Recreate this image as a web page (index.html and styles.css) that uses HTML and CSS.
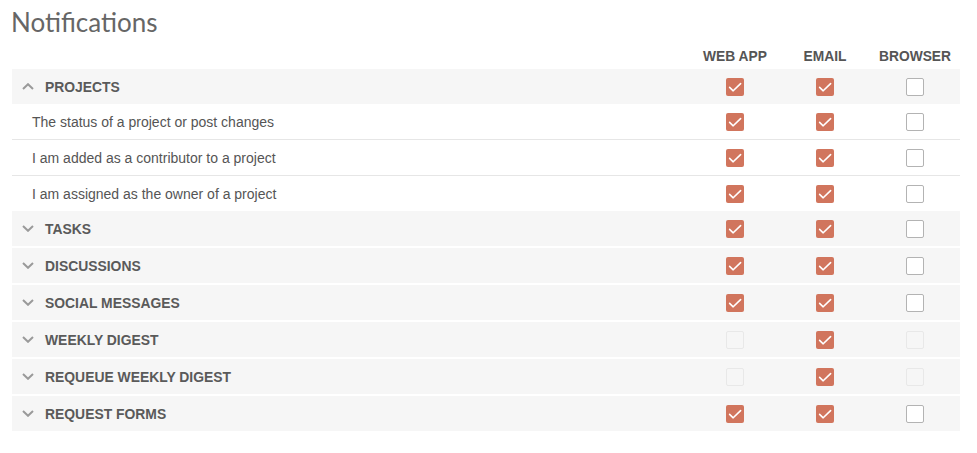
FILE: index.html
```html
<!DOCTYPE html>
<html>
<head>
<meta charset="utf-8">
<link rel="stylesheet" href="styles.css">
</head>
<body>
<div class="page">
  <h1 class="title">Notifications</h1>
  <div class="table">
    <div class="row head">
      <div></div>
      <div class="col">WEB APP</div>
      <div class="col">EMAIL</div>
      <div class="col">BROWSER</div>
    </div>

    <div class="row group open">
      <div class="label"><svg class="chev" width="12" height="7" viewBox="0 0 12 7"><polyline points="1,6 6,1.2 11,6"/></svg>PROJECTS</div>
      <div class="cell"><span class="cb on"><svg viewBox="0 0 18 18"><polyline points="3.6,9.4 7.2,12.8 14.6,5.6"/></svg></span></div>
      <div class="cell"><span class="cb on"><svg viewBox="0 0 18 18"><polyline points="3.6,9.4 7.2,12.8 14.6,5.6"/></svg></span></div>
      <div class="cell"><span class="cb"></span></div>
    </div>
    <div class="row sub">
      <div class="text">The status of a project or post changes</div>
      <div class="cell"><span class="cb on"><svg viewBox="0 0 18 18"><polyline points="3.6,9.4 7.2,12.8 14.6,5.6"/></svg></span></div>
      <div class="cell"><span class="cb on"><svg viewBox="0 0 18 18"><polyline points="3.6,9.4 7.2,12.8 14.6,5.6"/></svg></span></div>
      <div class="cell"><span class="cb"></span></div>
    </div>
    <div class="row sub">
      <div class="text">I am added as a contributor to a project</div>
      <div class="cell"><span class="cb on"><svg viewBox="0 0 18 18"><polyline points="3.6,9.4 7.2,12.8 14.6,5.6"/></svg></span></div>
      <div class="cell"><span class="cb on"><svg viewBox="0 0 18 18"><polyline points="3.6,9.4 7.2,12.8 14.6,5.6"/></svg></span></div>
      <div class="cell"><span class="cb"></span></div>
    </div>
    <div class="row sub last">
      <div class="text">I am assigned as the owner of a project</div>
      <div class="cell"><span class="cb on"><svg viewBox="0 0 18 18"><polyline points="3.6,9.4 7.2,12.8 14.6,5.6"/></svg></span></div>
      <div class="cell"><span class="cb on"><svg viewBox="0 0 18 18"><polyline points="3.6,9.4 7.2,12.8 14.6,5.6"/></svg></span></div>
      <div class="cell"><span class="cb"></span></div>
    </div>

    <div class="row group">
      <div class="label"><svg class="chev" width="12" height="7" viewBox="0 0 12 7"><polyline points="1,1 6,5.8 11,1"/></svg>TASKS</div>
      <div class="cell"><span class="cb on"><svg viewBox="0 0 18 18"><polyline points="3.6,9.4 7.2,12.8 14.6,5.6"/></svg></span></div>
      <div class="cell"><span class="cb on"><svg viewBox="0 0 18 18"><polyline points="3.6,9.4 7.2,12.8 14.6,5.6"/></svg></span></div>
      <div class="cell"><span class="cb"></span></div>
    </div>
    <div class="row group">
      <div class="label"><svg class="chev" width="12" height="7" viewBox="0 0 12 7"><polyline points="1,1 6,5.8 11,1"/></svg>DISCUSSIONS</div>
      <div class="cell"><span class="cb on"><svg viewBox="0 0 18 18"><polyline points="3.6,9.4 7.2,12.8 14.6,5.6"/></svg></span></div>
      <div class="cell"><span class="cb on"><svg viewBox="0 0 18 18"><polyline points="3.6,9.4 7.2,12.8 14.6,5.6"/></svg></span></div>
      <div class="cell"><span class="cb"></span></div>
    </div>
    <div class="row group">
      <div class="label"><svg class="chev" width="12" height="7" viewBox="0 0 12 7"><polyline points="1,1 6,5.8 11,1"/></svg>SOCIAL MESSAGES</div>
      <div class="cell"><span class="cb on"><svg viewBox="0 0 18 18"><polyline points="3.6,9.4 7.2,12.8 14.6,5.6"/></svg></span></div>
      <div class="cell"><span class="cb on"><svg viewBox="0 0 18 18"><polyline points="3.6,9.4 7.2,12.8 14.6,5.6"/></svg></span></div>
      <div class="cell"><span class="cb"></span></div>
    </div>
    <div class="row group">
      <div class="label"><svg class="chev" width="12" height="7" viewBox="0 0 12 7"><polyline points="1,1 6,5.8 11,1"/></svg>WEEKLY DIGEST</div>
      <div class="cell"><span class="cb off"></span></div>
      <div class="cell"><span class="cb on"><svg viewBox="0 0 18 18"><polyline points="3.6,9.4 7.2,12.8 14.6,5.6"/></svg></span></div>
      <div class="cell"><span class="cb off"></span></div>
    </div>
    <div class="row group">
      <div class="label"><svg class="chev" width="12" height="7" viewBox="0 0 12 7"><polyline points="1,1 6,5.8 11,1"/></svg>REQUEUE WEEKLY DIGEST</div>
      <div class="cell"><span class="cb off"></span></div>
      <div class="cell"><span class="cb on"><svg viewBox="0 0 18 18"><polyline points="3.6,9.4 7.2,12.8 14.6,5.6"/></svg></span></div>
      <div class="cell"><span class="cb off"></span></div>
    </div>
    <div class="row group">
      <div class="label"><svg class="chev" width="12" height="7" viewBox="0 0 12 7"><polyline points="1,1 6,5.8 11,1"/></svg>REQUEST FORMS</div>
      <div class="cell"><span class="cb on"><svg viewBox="0 0 18 18"><polyline points="3.6,9.4 7.2,12.8 14.6,5.6"/></svg></span></div>
      <div class="cell"><span class="cb on"><svg viewBox="0 0 18 18"><polyline points="3.6,9.4 7.2,12.8 14.6,5.6"/></svg></span></div>
      <div class="cell"><span class="cb"></span></div>
    </div>
  </div>
</div>
</body>
</html>
```

FILE: styles.css
```css
html, body {
  margin: 0;
  padding: 0;
  background: #ffffff;
}
.page {
  padding: 7px 17px 0 12px;
  font-family: "Liberation Sans", Arial, sans-serif;
  color: #555555;
}
.title {
  margin: 0 0 0 -1px;
  font-family: Lato, "Open Sans", sans-serif;
  font-weight: 400;
  font-size: 26px;
  line-height: 31px;
  color: #666666;
}
.table {
  display: flex;
  flex-direction: column;
}
.row {
  display: grid;
  grid-template-columns: 1fr 90px 90px 90px;
  align-items: center;
}
.head {
  height: 25px;
  margin-top: 6px;
  font-weight: 700;
  font-size: 13.8px;
  color: #555555;
}
.col {
  text-align: center;
}
.group {
  height: 35px;
  background: #f6f6f6;
  margin-bottom: 2px;
}
.group.open {
  margin-bottom: 0;
}
.label {
  display: flex;
  align-items: center;
  padding-left: 10px;
  font-weight: 700;
  font-size: 13.9px;
  color: #5a5a5a;
}
.chev {
  margin-right: 11px;
  fill: none;
  stroke: #9a9a9a;
  stroke-width: 2;
}
.sub {
  height: 35px;
  border-bottom: 1px solid #e6e6e6;
}
.sub.last {
  border-bottom: none;
}
.text {
  padding-left: 20px;
  font-size: 14px;
  color: #555555;
}
.cell {
  display: flex;
  justify-content: center;
  align-items: center;
}
.cb {
  box-sizing: border-box;
  width: 18px;
  height: 18px;
  border: 1px solid #b3b3b3;
  border-radius: 2px;
  background: #ffffff;
  display: block;
}
.cb.on {
  border: none;
  background: #d1755d;
}
.cb.off {
  border-color: #e8e8e8;
  background: #f6f6f6;
}
.cb svg {
  display: block;
  width: 18px;
  height: 18px;
  fill: none;
  stroke: #ffffff;
  stroke-width: 1.6;
  stroke-linecap: round;
  stroke-linejoin: round;
}
```
